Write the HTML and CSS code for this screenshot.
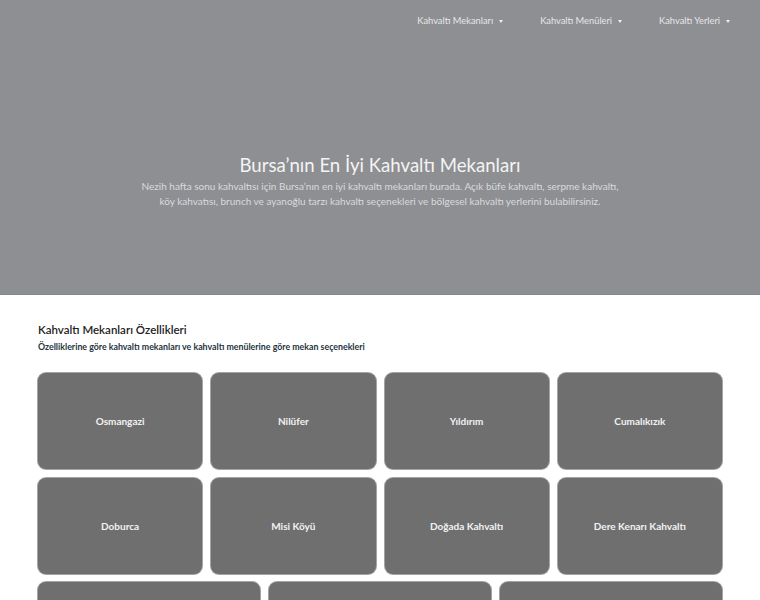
FILE: index.html
```html
<!DOCTYPE html>
<html lang="tr">
<head>
<meta charset="utf-8">
<title>Bursa Kahvaltı Mekanları</title>
<link rel="stylesheet" href="styles.css">
</head>
<body>
<header class="hero">
  <nav class="nav">
    <a class="nav-item" href="#">Kahvaltı Mekanları <span class="caret"></span></a>
    <a class="nav-item" href="#">Kahvaltı Menüleri <span class="caret"></span></a>
    <a class="nav-item" href="#">Kahvaltı Yerleri <span class="caret"></span></a>
  </nav>
  <div class="hero-text">
    <h1 class="hero-title">Bursa’nın En İyi Kahvaltı Mekanları</h1>
    <p class="hero-desc">Nezih hafta sonu kahvaltısı için Bursa’nın en iyi kahvaltı mekanları burada. Açık büfe kahvaltı, serpme kahvaltı, köy kahvatısı, brunch ve ayanoğlu tarzı kahvaltı seçenekleri ve bölgesel kahvaltı yerlerini bulabilirsiniz.</p>
  </div>
</header>
<main class="section">
  <h2 class="section-title">Kahvaltı Mekanları Özellikleri</h2>
  <p class="section-sub">Özelliklerine göre kahvaltı mekanları ve kahvaltı menülerine göre mekan seçenekleri</p>
  <div class="grid grid4">
    <a class="card" href="#">Osmangazi</a>
    <a class="card" href="#">Nilüfer</a>
    <a class="card" href="#">Yıldırım</a>
    <a class="card" href="#">Cumalıkızık</a>
    <a class="card" href="#">Doburca</a>
    <a class="card" href="#">Misi Köyü</a>
    <a class="card" href="#">Doğada Kahvaltı</a>
    <a class="card" href="#">Dere Kenarı Kahvaltı</a>
  </div>
  <div class="grid grid3">
    <a class="card" href="#">Açık Büfe Kahvaltı</a>
    <a class="card" href="#">Serpme Kahvaltı</a>
    <a class="card" href="#">Köy Kahvaltısı</a>
  </div>
</main>
</body>
</html>
```
FILE: styles.css
```css
* { box-sizing: border-box; }
body {
  margin: 0;
  font-family: Lato, "Open Sans", sans-serif;
  background: #ffffff;
}
a { text-decoration: none; color: inherit; }

.hero {
  background: #8e8f93;
  height: 295px;
  border-bottom: 1px solid #85868a;
}
.nav {
  display: flex;
  justify-content: flex-end;
  padding: 14px 30px 0 0;
}
.nav-item {
  color: #e6e6e8;
  font-size: 9.3px;
  line-height: 14px;
  margin-left: 37px;
  display: flex;
  align-items: center;
}
.caret {
  display: inline-block;
  width: 0;
  height: 0;
  margin-left: 6px;
  border-left: 2.5px solid transparent;
  border-right: 2.5px solid transparent;
  border-top: 3px solid #f0f0f0;
}
.hero-text {
  text-align: center;
  padding-top: 125px;
}
.hero-title {
  margin: 0;
  font-weight: 400;
  font-size: 18.6px;
  line-height: 24px;
  color: #f4f4f4;
}
.hero-desc {
  margin: 2px auto 0;
  width: 490px;
  font-size: 10px;
  line-height: 15px;
  color: #dadadc;
}

.section {
  width: 684px;
  margin: 0 auto;
  padding-top: 27px;
}
.section-title {
  margin: 0;
  font-size: 11.5px;
  font-weight: 600;
  line-height: 16px;
  color: #222;
}
.section-sub {
  margin: 2px 0 0;
  font-size: 8.8px;
  font-weight: 700;
  line-height: 13px;
  color: #25343f;
}
.grid {
  display: grid;
  gap: 9px;
}
.grid4 {
  grid-template-columns: repeat(4, 1fr);
  margin-top: 20px;
}
.grid3 {
  grid-template-columns: repeat(3, 1fr);
  margin-top: 8px;
}
.card {
  height: 96px;
  background: #6f6f6f;
  border-radius: 8px;
  box-shadow: 0 0 0 1px #a4a4a4;
  color: #f2f2f2;
  font-size: 10px;
  font-weight: 700;
  display: flex;
  align-items: center;
  justify-content: center;
}
```
